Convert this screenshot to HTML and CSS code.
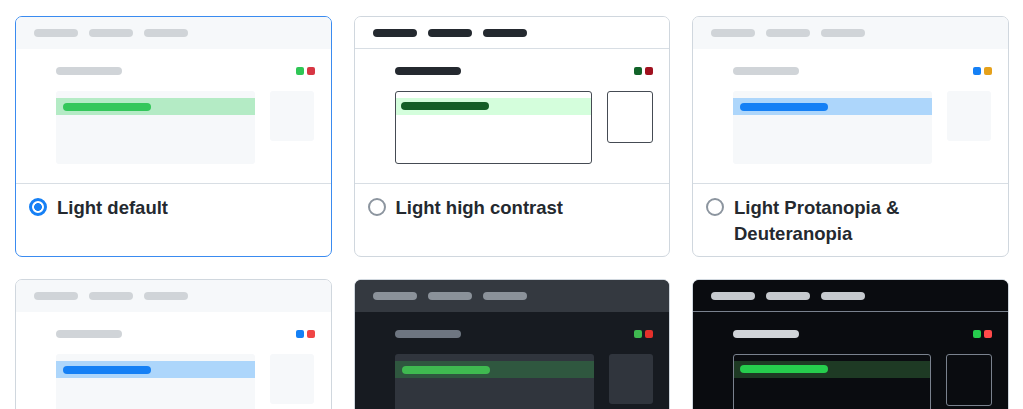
FILE: index.html
```html
<!DOCTYPE html>
<html lang="en">
<head>
<meta charset="utf-8">
<title>Theme picker</title>
<link rel="stylesheet" href="styles.css">
</head>
<body>
<div class="grid">
  <label class="card selected t-light">
    <div class="preview">
      <div class="p-head"><span class="pill"></span><span class="pill"></span><span class="pill"></span></div>
      <div class="p-body">
        <div class="p-title"><span class="tpill"></span><span class="sq sq1"></span><span class="sq sq2"></span></div>
        <div class="p-boxes">
          <div class="mbox"><div class="band"><span class="bpill"></span></div></div>
          <div class="sbox"></div>
        </div>
      </div>
    </div>
    <div class="label"><span class="radio checked"></span><span class="name">Light default</span></div>
  </label>

  <label class="card t-hc">
    <div class="preview">
      <div class="p-head"><span class="pill"></span><span class="pill"></span><span class="pill"></span></div>
      <div class="p-body">
        <div class="p-title"><span class="tpill"></span><span class="sq sq1"></span><span class="sq sq2"></span></div>
        <div class="p-boxes">
          <div class="mbox"><div class="band"><span class="bpill"></span></div></div>
          <div class="sbox"></div>
        </div>
      </div>
    </div>
    <div class="label"><span class="radio"></span><span class="name">Light high contrast</span></div>
  </label>

  <label class="card t-prot">
    <div class="preview">
      <div class="p-head"><span class="pill"></span><span class="pill"></span><span class="pill"></span></div>
      <div class="p-body">
        <div class="p-title"><span class="tpill"></span><span class="sq sq1"></span><span class="sq sq2"></span></div>
        <div class="p-boxes">
          <div class="mbox"><div class="band"><span class="bpill"></span></div></div>
          <div class="sbox"></div>
        </div>
      </div>
    </div>
    <div class="label"><span class="radio"></span><span class="name">Light Protanopia &amp; Deuteranopia</span></div>
  </label>

  <label class="card t-trit">
    <div class="preview">
      <div class="p-head"><span class="pill"></span><span class="pill"></span><span class="pill"></span></div>
      <div class="p-body">
        <div class="p-title"><span class="tpill"></span><span class="sq sq1"></span><span class="sq sq2"></span></div>
        <div class="p-boxes">
          <div class="mbox"><div class="band"><span class="bpill"></span></div></div>
          <div class="sbox"></div>
        </div>
      </div>
    </div>
    <div class="label"><span class="radio"></span><span class="name">Light Tritanopia</span></div>
  </label>

  <label class="card t-dark">
    <div class="preview">
      <div class="p-head"><span class="pill"></span><span class="pill"></span><span class="pill"></span></div>
      <div class="p-body">
        <div class="p-title"><span class="tpill"></span><span class="sq sq1"></span><span class="sq sq2"></span></div>
        <div class="p-boxes">
          <div class="mbox"><div class="band"><span class="bpill"></span></div></div>
          <div class="sbox"></div>
        </div>
      </div>
    </div>
    <div class="label"><span class="radio"></span><span class="name">Dark default</span></div>
  </label>

  <label class="card t-dhc">
    <div class="preview">
      <div class="p-head"><span class="pill"></span><span class="pill"></span><span class="pill"></span></div>
      <div class="p-body">
        <div class="p-title"><span class="tpill"></span><span class="sq sq1"></span><span class="sq sq2"></span></div>
        <div class="p-boxes">
          <div class="mbox"><div class="band"><span class="bpill"></span></div></div>
          <div class="sbox"></div>
        </div>
      </div>
    </div>
    <div class="label"><span class="radio"></span><span class="name">Dark high contrast</span></div>
  </label>
</div>
</body>
</html>
```

FILE: styles.css
```css
html, body {
  margin: 0;
  padding: 0;
  overflow: hidden;
  background: #ffffff;
  font-family: "Liberation Sans", Arial, sans-serif;
}

.grid {
  display: grid;
  grid-template-columns: repeat(3, 316.5px);
  column-gap: 22px;
  row-gap: 22px;
  padding: 16px 0 0 15px;
}

.card {
  display: flex;
  flex-direction: column;
  border: 1px solid #d0d7de;
  border-radius: 7px;
  overflow: hidden;
  background: #ffffff;
  height: 241px;
  box-sizing: border-box;
}

.card.selected {
  border-color: #3a8bf0;
}

.preview {
  border-bottom: 1px solid #d8dee4;
  height: 167px;
  box-sizing: border-box;
}

.p-head {
  display: flex;
  align-items: center;
  gap: 11px;
  height: 32px;
  padding-left: 18px;
  box-sizing: border-box;
  background: #f6f8fa;
}

.pill {
  width: 44px;
  height: 8px;
  border-radius: 4px;
  background: #d0d4d8;
}

.p-body {
  padding: 17px 16px 0 40px;
}

.p-title {
  display: flex;
  align-items: center;
  height: 9px;
}

.tpill {
  width: 66px;
  height: 8px;
  border-radius: 4px;
  background: #d0d4d8;
  margin-right: auto;
}

.sq {
  width: 8px;
  height: 8px;
  border-radius: 2px;
}

.sq2 {
  margin-left: 3px;
}

.p-boxes {
  display: flex;
  align-items: flex-start;
  gap: 15px;
  margin-top: 16px;
}

.mbox {
  width: 199px;
  height: 73px;
  border-radius: 3px;
  background: #f6f8fa;
  padding-top: 7px;
  box-sizing: border-box;
}

.band {
  height: 17px;
  display: flex;
  align-items: center;
  padding-left: 7px;
}

.bpill {
  width: 88px;
  height: 8px;
  border-radius: 4px;
}

.sbox {
  width: 44px;
  height: 50px;
  border-radius: 3px;
  background: #f6f8fa;
}

.label {
  display: flex;
  align-items: flex-start;
  gap: 10px;
  padding: 11px 16px 0 13px;
}

.name {
  font-size: 18.5px;
  line-height: 26px;
  font-weight: 700;
  color: #24292f;
}

.radio {
  flex: none;
  width: 18px;
  height: 18px;
  box-sizing: border-box;
  border-radius: 50%;
  border: 2px solid #8c959f;
  margin-top: 3px;
  background: #ffffff;
}

.radio.checked {
  border: 3px solid #1680f5;
  background: radial-gradient(circle, #1680f5 0 3.6px, #ffffff 4.2px);
}

/* Light default */
.t-light .band { background: #b4ebc5; }
.t-light .bpill { background: #33c75a; }
.t-light .sq1 { background: #2fc655; }
.t-light .sq2 { background: #d73643; }

/* Light high contrast */
.t-hc .p-head {
  background: #ffffff;
  border-bottom: 1px solid #d8dee4;
}
.t-hc .pill, .t-hc .tpill { background: #24292f; }
.t-hc .mbox {
  background: #ffffff;
  border: 1.5px solid #454b53;
  padding-top: 5.5px;
}
.t-hc .band { background: #d4fedc; padding-left: 5.5px; }
.t-hc .bpill { background: #145e26; }
.t-hc .sbox {
  background: #ffffff;
  border: 1.5px solid #454b53;
}
.t-hc .sq1 { background: #116329; }
.t-hc .sq2 { background: #a0111f; }

/* Light protanopia */
.t-prot .band { background: #add6fb; }
.t-prot .bpill { background: #1580f5; }
.t-prot .sq1 { background: #1580f5; }
.t-prot .sq2 { background: #e6a11a; }

/* Light tritanopia */
.t-trit .band { background: #add6fb; }
.t-trit .bpill { background: #1580f5; }
.t-trit .sq1 { background: #1580f5; }
.t-trit .sq2 { background: #f04545; }

/* Dark default */
.t-dark .preview { background: #171b21; }
.t-dark .p-head { background: #343940; }
.t-dark .pill { background: #8b929a; }
.t-dark .tpill { background: #6e7681; }
.t-dark .mbox, .t-dark .sbox { background: #30353d; }
.t-dark .band { background: #2f573f; }
.t-dark .bpill { background: #3fb950; }
.t-dark .sq1 { background: #3fb950; }
.t-dark .sq2 { background: #e5302b; }

/* Dark high contrast */
.t-dhc .preview { background: #0a0c10; }
.t-dhc .p-head {
  background: #0a0c10;
  border-bottom: 1.5px solid #7a828e;
}
.t-dhc .pill { background: #c6cace; }
.t-dhc .tpill { background: #d0d4d8; }
.t-dhc .mbox {
  background: #0a0c10;
  border: 1.5px solid #7a828e;
  padding-top: 5.5px;
}
.t-dhc .band { background: #1e3a24; padding-left: 5.5px; }
.t-dhc .bpill { background: #26cd4d; }
.t-dhc .sbox {
  background: #0a0c10;
  border: 1.5px solid #7a828e;
}
.t-dhc .sq1 { background: #26cd4d; }
.t-dhc .sq2 { background: #ff4a4a; }
```
